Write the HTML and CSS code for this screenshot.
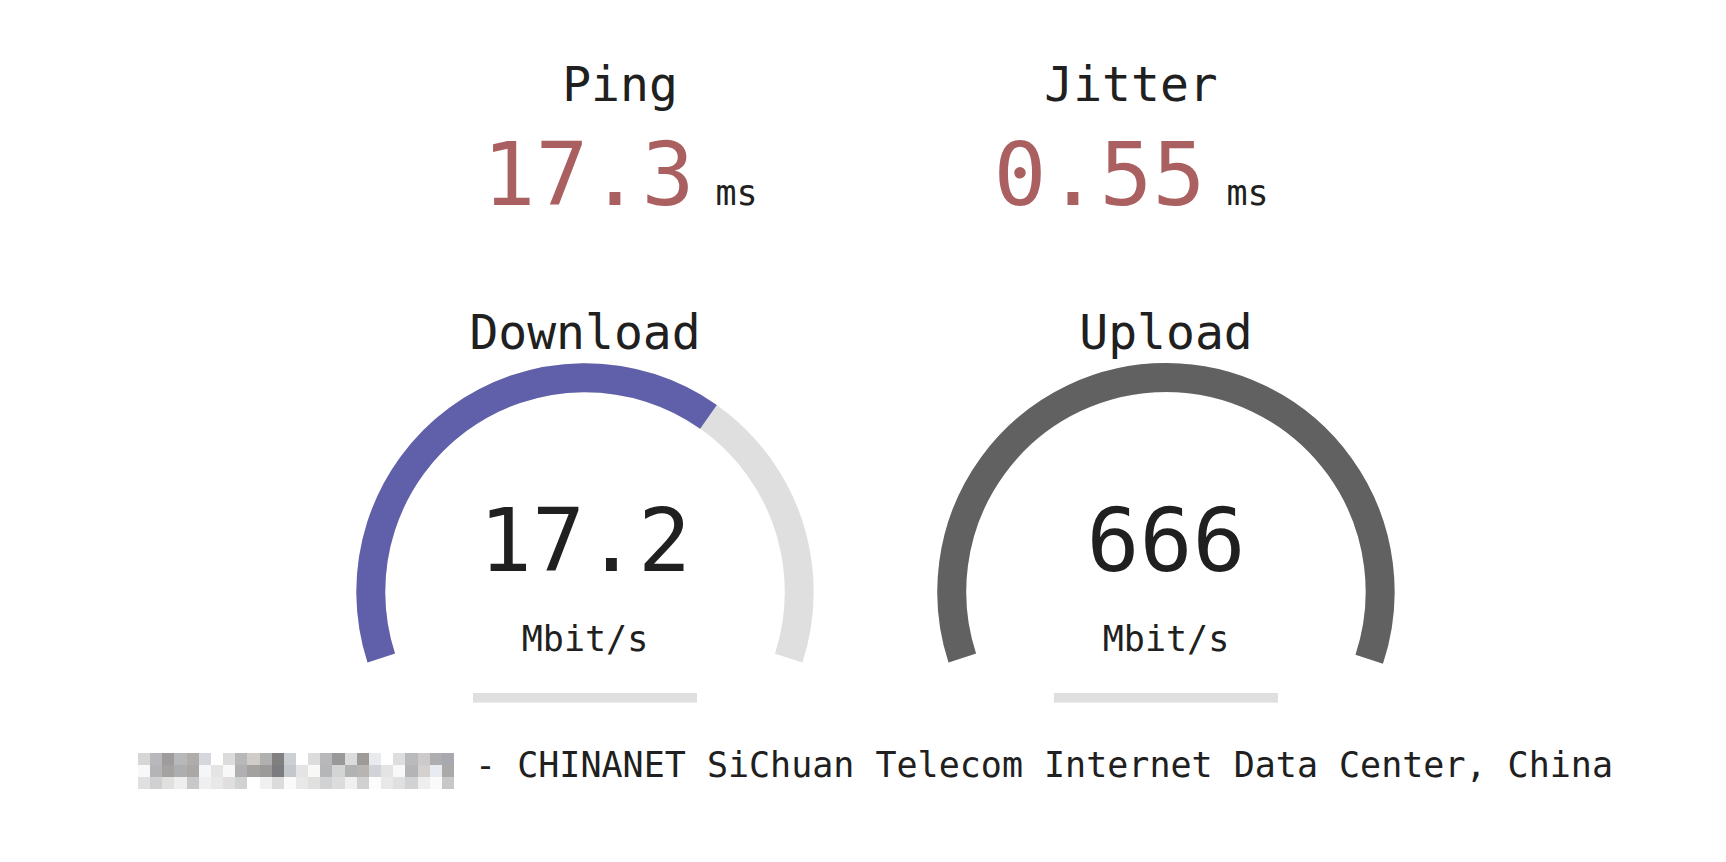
FILE: index.html
```html
<!DOCTYPE html>
<html lang="en">
<head>
    <meta charset="UTF-8">
    <title>LibreSpeed</title>
    <link rel="stylesheet" href="styles.css">
</head>
<body>
    <div class="test-group top">
        <div class="test-area2">
            <div class="test-name">Ping</div>
            <div class="meter"><span class="meter-text ping">17.3</span><span class="unit">ms</span></div>
        </div>
        <div class="test-area2">
            <div class="test-name">Jitter</div>
            <div class="meter"><span class="meter-text ping">0.55</span><span class="unit">ms</span></div>
        </div>
    </div>

    <div class="test-group gauges">
        <div class="test-area">
            <svg class="gauge" viewBox="0 0 560 438">
                <path class="track" d="M76.28 364.09 A214.2 214.2 0 1 1 483.72 364.09"/>
                <path class="dl" d="M76.28 364.09 A214.2 214.2 0 0 1 403.47 122.85"/>
                <rect class="prog" x="168" y="399" width="224" height="9.6"/>
            </svg>
            <div class="test-name">Download</div>
            <div class="meter-text">17.2</div>
            <div class="unit">Mbit/s</div>
        </div>
        <div class="test-area">
            <svg class="gauge" viewBox="0 0 560 438">
                <path class="track" d="M76.28 364.09 A214.2 214.2 0 1 1 483.72 364.09"/>
                <path class="ul" d="M76.28 364.09 A214.2 214.2 0 1 1 483.2 365.3"/>
                <rect class="prog" x="168" y="399" width="224" height="9.6"/>
            </svg>
            <div class="test-name">Upload</div>
            <div class="meter-text">666</div>
            <div class="unit">Mbit/s</div>
        </div>
    </div>

    <div class="ip-area"><svg class="ip-blur" viewBox="0 0 26 3" preserveAspectRatio="none">
        <rect x="0" y="0" width="1" height="1" fill="#d6d6d6"/><rect x="1" y="0" width="1" height="1" fill="#b8b8bc"/><rect x="2" y="0" width="1" height="1" fill="#9e9c9c"/><rect x="3" y="0" width="1" height="1" fill="#b6b8ba"/><rect x="4" y="0" width="1" height="1" fill="#b0acaa"/><rect x="5" y="0" width="1" height="1" fill="#d4d8dc"/><rect x="6" y="0" width="1" height="1" fill="#ffffff"/><rect x="7" y="0" width="1" height="1" fill="#dcdcdc"/><rect x="8" y="0" width="1" height="1" fill="#b8b8ba"/><rect x="9" y="0" width="1" height="1" fill="#d0ccc8"/><rect x="10" y="0" width="1" height="1" fill="#b0b0b0"/><rect x="11" y="0" width="1" height="1" fill="#808080"/><rect x="12" y="0" width="1" height="1" fill="#ccd0d4"/>
        <rect x="13" y="0" width="1" height="1" fill="#ffffff"/><rect x="14" y="0" width="1" height="1" fill="#dcdcdc"/><rect x="15" y="0" width="1" height="1" fill="#b8b8ba"/><rect x="16" y="0" width="1" height="1" fill="#9a9898"/><rect x="17" y="0" width="1" height="1" fill="#dcdcde"/><rect x="18" y="0" width="1" height="1" fill="#9e9a98"/><rect x="19" y="0" width="1" height="1" fill="#e8eaee"/><rect x="20" y="0" width="1" height="1" fill="#ffffff"/><rect x="21" y="0" width="1" height="1" fill="#dedede"/><rect x="22" y="0" width="1" height="1" fill="#b8babc"/><rect x="23" y="0" width="1" height="1" fill="#cccaca"/><rect x="24" y="0" width="1" height="1" fill="#aeaeb0"/><rect x="25" y="0" width="1" height="1" fill="#a8a8b0"/>
        <rect x="0" y="1" width="1" height="1" fill="#f8f8f8"/><rect x="1" y="1" width="1" height="1" fill="#b4b4b6"/><rect x="2" y="1" width="1" height="1" fill="#a4a2a0"/><rect x="3" y="1" width="1" height="1" fill="#acaeb0"/><rect x="4" y="1" width="1" height="1" fill="#aaa8a6"/><rect x="5" y="1" width="1" height="1" fill="#f4f6f8"/><rect x="6" y="1" width="1" height="1" fill="#e4e4e4"/><rect x="7" y="1" width="1" height="1" fill="#f8f8f8"/><rect x="8" y="1" width="1" height="1" fill="#b0b0b2"/><rect x="9" y="1" width="1" height="1" fill="#a4a2a0"/><rect x="10" y="1" width="1" height="1" fill="#9c9a98"/><rect x="11" y="1" width="1" height="1" fill="#7c7c80"/><rect x="12" y="1" width="1" height="1" fill="#c4c8cc"/>
        <rect x="13" y="1" width="1" height="1" fill="#e4e4e4"/><rect x="14" y="1" width="1" height="1" fill="#f8f8f6"/><rect x="15" y="1" width="1" height="1" fill="#b4b6b8"/><rect x="16" y="1" width="1" height="1" fill="#d4d4d4"/><rect x="17" y="1" width="1" height="1" fill="#b0b2b4"/><rect x="18" y="1" width="1" height="1" fill="#b8b4b2"/><rect x="19" y="1" width="1" height="1" fill="#d0d4d8"/><rect x="20" y="1" width="1" height="1" fill="#e4e4e4"/><rect x="21" y="1" width="1" height="1" fill="#f8f8f8"/><rect x="22" y="1" width="1" height="1" fill="#b4b4b6"/><rect x="23" y="1" width="1" height="1" fill="#d4d0ce"/><rect x="24" y="1" width="1" height="1" fill="#e8ecf0"/><rect x="25" y="1" width="1" height="1" fill="#acaaa8"/>
        <rect x="0" y="2" width="1" height="1" fill="#e0e0e0"/><rect x="1" y="2" width="1" height="1" fill="#d0d0d2"/><rect x="2" y="2" width="1" height="1" fill="#e0e0de"/><rect x="3" y="2" width="1" height="1" fill="#eeeeee"/><rect x="4" y="2" width="1" height="1" fill="#c8c8c8"/><rect x="5" y="2" width="1" height="1" fill="#eeeff0"/><rect x="6" y="2" width="1" height="1" fill="#e8e8e8"/><rect x="7" y="2" width="1" height="1" fill="#e0dede"/><rect x="8" y="2" width="1" height="1" fill="#d0d2d4"/><rect x="9" y="2" width="1" height="1" fill="#ffffff"/><rect x="10" y="2" width="1" height="1" fill="#f0f0f0"/><rect x="11" y="2" width="1" height="1" fill="#dcdcdc"/><rect x="12" y="2" width="1" height="1" fill="#fafafa"/>
        <rect x="13" y="2" width="1" height="1" fill="#e8e8e8"/><rect x="14" y="2" width="1" height="1" fill="#e0e0de"/><rect x="15" y="2" width="1" height="1" fill="#d0d2d4"/><rect x="16" y="2" width="1" height="1" fill="#dcdcdc"/><rect x="17" y="2" width="1" height="1" fill="#f0f0f0"/><rect x="18" y="2" width="1" height="1" fill="#d0d0d2"/><rect x="19" y="2" width="1" height="1" fill="#fcfcfc"/><rect x="20" y="2" width="1" height="1" fill="#e8e8e8"/><rect x="21" y="2" width="1" height="1" fill="#e0e0e0"/><rect x="22" y="2" width="1" height="1" fill="#d0d2d4"/><rect x="23" y="2" width="1" height="1" fill="#eeeeee"/><rect x="24" y="2" width="1" height="1" fill="#fafafa"/><rect x="25" y="2" width="1" height="1" fill="#c8c8c8"/>
    </svg> - CHINANET SiChuan Telecom Internet Data Center, China</div>
</body>
</html>
```

FILE: styles.css
```css
body { margin: 0; background: #fff; color: #202020; font-family: "DejaVu Sans Mono", "Liberation Mono", monospace; font-size: 35px; }

.test-group { display: flex; justify-content: center; gap: 21px; padding-left: 25px; }
.test-group.top { padding-top: 56px; }
.test-group.gauges { margin-top: 75px; }

.test-name { font-size: 48px; line-height: 56px; text-align: center; }

/* ping / jitter */
.test-area2 { width: 490px; text-align: center; }
.meter { display: flex; justify-content: center; align-items: baseline; gap: 21px; margin-top: 19px; }
.meter .meter-text { font-size: 88px; line-height: 88px; }
.meter .unit { font-size: 35px; line-height: 35px; }
.ping { color: #aa6060; }

/* gauges */
.test-area { position: relative; width: 560px; height: 438px; text-align: center; }
.test-area > div { position: relative; }
.test-area .test-name { padding-top: 10px; }
.test-area .meter-text { font-size: 88px; line-height: 88px; margin-top: 137px; }
.test-area .unit { font-size: 35px; line-height: 35px; margin-top: 37px; }
.gauge { position: absolute; top: 0; left: 0; width: 100%; height: 100%; }
.gauge path { fill: none; stroke-width: 28.9; }
.gauge .track { stroke: #dfdfdf; }
.gauge .dl { stroke: #6060aa; }
.gauge .ul { stroke: #616161; }
.gauge .prog { fill: #dfdfdf; }

/* server info */
.ip-area { margin-top: 12px; padding-left: 25px; line-height: 42px; text-align: center; white-space: nowrap; }
.ip-blur { width: 316px; height: 36px; vertical-align: -12px; shape-rendering: crispEdges; }
```
